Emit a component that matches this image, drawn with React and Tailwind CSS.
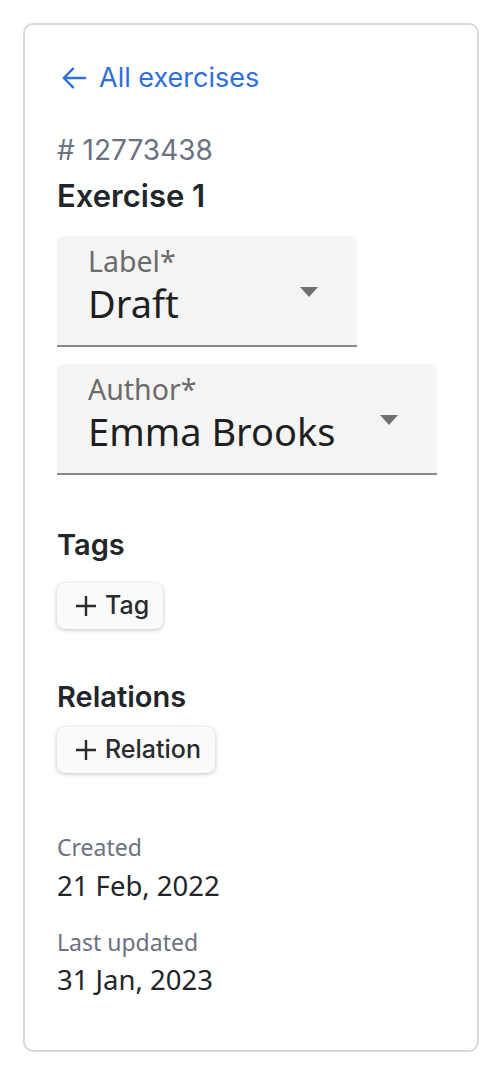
import React from "react";

function SelectField({ label, value, width }) {
  return (
    <div
      className={`${width} h-[111px] bg-[#f4f4f4] rounded-t-[8px] border-b-2 border-[#8a8a8a] relative px-[31px] pt-[7px] font-['Noto_Sans',sans-serif]`}
    >
      <div className="text-[28.5px] leading-[36px] text-[#6b6b6b]">{label}</div>
      <div className="text-[38px] leading-[48px] text-[#1f1f1f]">{value}</div>
      <svg className="absolute right-[39px] top-[51px]" width="18" height="10" viewBox="0 0 18 10">
        <path d="M0 0h18L9 10z" fill="#707070" />
      </svg>
    </div>
  );
}

function AddButton({ children }) {
  return (
    <button className="h-[46px] pl-[18px] pr-[14px] flex items-center gap-[8px] bg-[#fafafa] rounded-[8px] shadow-[0_1px_4px_rgba(0,0,0,0.25)] text-[25px] font-medium text-[#2a2b2e] font-['Inter',sans-serif]">
      <svg width="22" height="22" viewBox="0 0 22 22">
        <path d="M11 1v20M1 11h20" stroke="#2a2b2e" strokeWidth="2.4" />
      </svg>
      {children}
    </button>
  );
}

export default function App() {
  return (
    <div className="min-h-screen bg-white p-[23px]">
      <div className="h-[1029px] border-2 border-[#d6d9dd] rounded-[10px] px-[32px] pt-[35px]">
        <a className="flex items-center gap-[12px] text-[#2f6fdb] text-[27px] leading-[36px] font-['Inter',sans-serif]">
          <svg className="ml-[4px]" width="26" height="26" viewBox="0 0 28 26" fill="none">
            <path d="M26 13H3M13 3L3 13l10 10" stroke="#2f6fdb" strokeWidth="2.6" strokeLinecap="round" strokeLinejoin="round" />
          </svg>
          All exercises
        </a>
        <div className="mt-[38px] text-[28px] leading-[32px] text-[#6b7280] font-['Inter',sans-serif]">
          # 12773438
        </div>
        <h1 className="mt-[12px] text-[31px] leading-[36px] font-semibold text-[#22252a] font-['Inter',sans-serif]">
          Exercise 1
        </h1>
        <div className="mt-[22px] flex flex-col gap-[17px]">
          <SelectField label="Label*" value="Draft" width="w-[300px]" />
          <SelectField label="Author*" value="Emma Brooks" width="w-[380px]" />
        </div>
        <h2 className="mt-[54px] text-[29px] leading-[32px] font-semibold text-[#22252a] font-['Inter',sans-serif]">
          Tags
        </h2>
        <div className="mt-[22px] flex">
          <AddButton>Tag</AddButton>
        </div>
        <h2 className="mt-[52px] text-[29px] leading-[32px] font-semibold text-[#22252a] font-['Inter',sans-serif]">
          Relations
        </h2>
        <div className="mt-[14px] flex">
          <AddButton>Relation</AddButton>
        </div>
        <div className="font-['Noto_Sans',sans-serif]">
          <div className="mt-[59px] text-[23px] leading-[30px] text-[#6b7280]">Created</div>
          <div className="mt-[7px] text-[27.5px] leading-[34px] text-[#22252a]">21 Feb, 2022</div>
          <div className="mt-[24px] text-[23px] leading-[30px] text-[#6b7280]">Last updated</div>
          <div className="mt-[6px] text-[27.5px] leading-[34px] text-[#22252a]">31 Jan, 2023</div>
        </div>
      </div>
    </div>
  );
}
